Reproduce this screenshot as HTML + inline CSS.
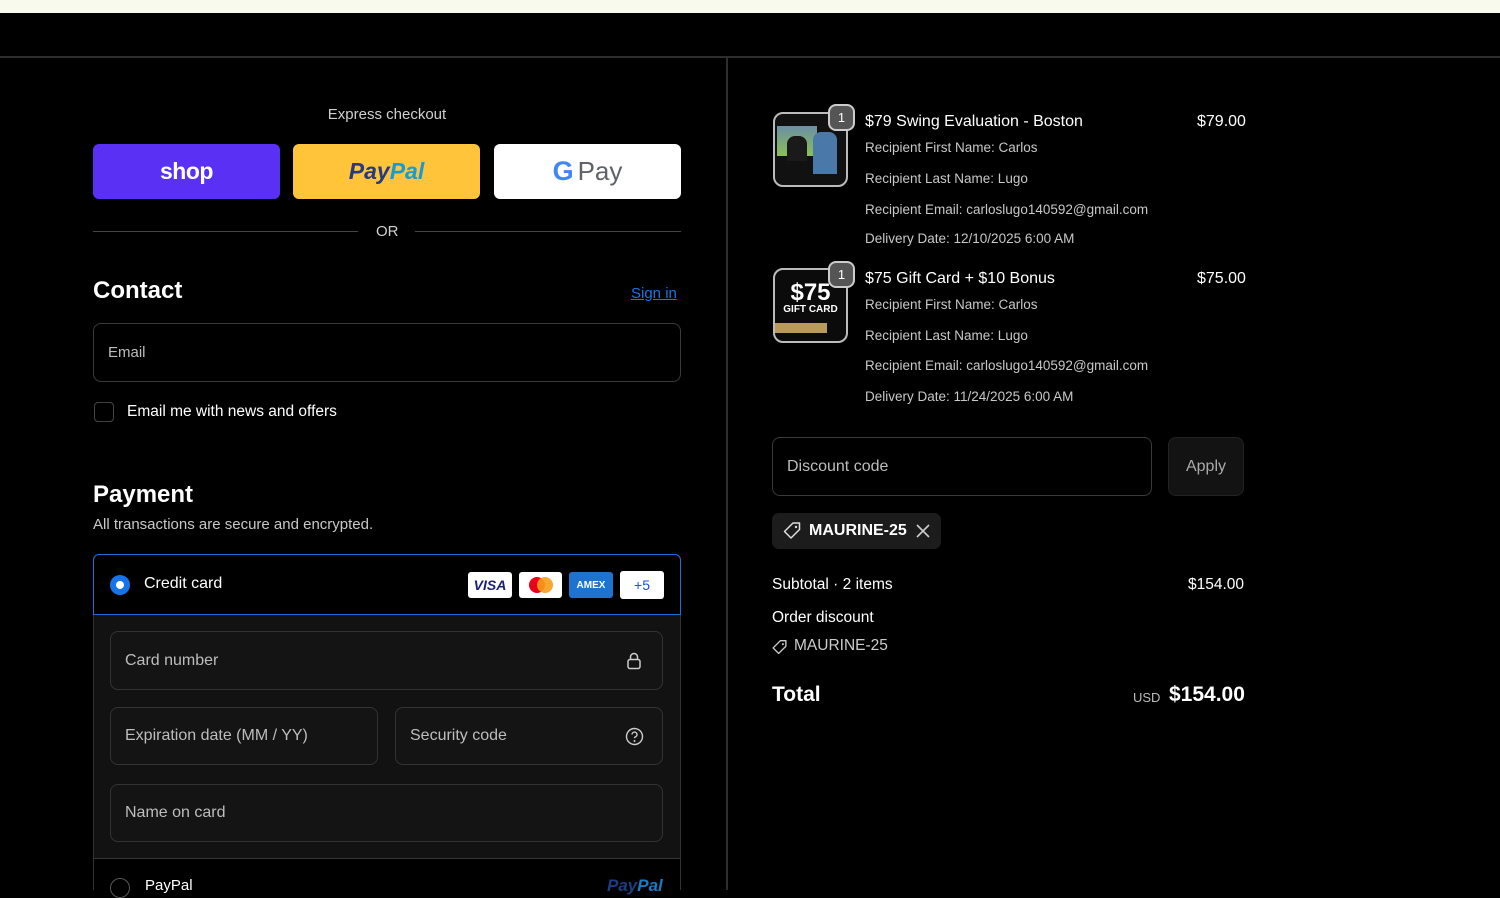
<!DOCTYPE html>
<html><head><meta charset="utf-8"><style>
*{box-sizing:border-box;margin:0;padding:0}
body{width:1500px;height:890px;overflow:hidden;background:#000;font-family:"Liberation Sans",sans-serif;color:#fff;position:relative}
.a{position:absolute}
.inp{position:absolute;border:1px solid #3a3a3a;border-radius:8px;background:#000;color:#bdbdbd;font-size:16px;padding-left:14px;display:flex;align-items:center}
.dk{background:#141414;border-color:#333}
.g{color:#c8c8c8;font-size:13.5px}
</style></head><body>
<div class="a" style="left:0;top:0;width:1500px;height:13px;background:#f8faee"></div>
<div class="a" style="left:0;top:56px;width:1500px;height:2px;background:#2e2e2e"></div>
<div class="a" style="left:726px;top:57px;width:2px;height:833px;background:#2e2e2e"></div>

<div class="a" style="left:93px;top:106px;width:588px;text-align:center;font-size:15px;color:#d0d0d0">Express checkout</div>
<div class="a" style="left:93px;top:144px;width:187px;height:55px;border-radius:6px;background:#5a31f4;display:flex;align-items:center;justify-content:center;font-weight:bold;font-size:23px;letter-spacing:-0.5px">shop</div>
<div class="a" style="left:293px;top:144px;width:187px;height:55px;border-radius:6px;background:#ffc439;display:flex;align-items:center;justify-content:center;font-weight:bold;font-style:italic;font-size:23px"><span style="color:#253b80">Pay</span><span style="color:#179bd7">Pal</span></div>
<div class="a" style="left:494px;top:144px;width:187px;height:55px;border-radius:6px;background:#fff;display:flex;align-items:center;justify-content:center;font-size:26px;color:#5f6368"><b style="color:#4285f4;font-size:27px;margin-right:4px">G</b>Pay</div>
<div class="a" style="left:93px;top:231px;width:265px;height:1px;background:#444"></div>
<div class="a" style="left:415px;top:231px;width:266px;height:1px;background:#444"></div>
<div class="a" style="left:376px;top:223px;font-size:15px;color:#d0d0d0">OR</div>

<div class="a" style="left:93px;top:277px;font-size:24px;font-weight:bold">Contact</div>
<div class="a" style="left:631px;top:285px;font-size:15px;color:#1773e8;text-decoration:underline">Sign in</div>
<div class="inp" style="left:93px;top:323px;width:588px;height:59px;font-size:15px">Email</div>
<div class="a" style="left:94px;top:402px;width:20px;height:20px;border:1px solid #444;border-radius:4px"></div>
<div class="a" style="left:127px;top:403px;font-size:15.5px">Email me with news and offers</div>

<div class="a" style="left:93px;top:481px;font-size:24px;font-weight:bold">Payment</div>
<div class="a" style="left:93px;top:516px;font-size:15px;color:#c8c8c8">All transactions are secure and encrypted.</div>

<div class="a" style="left:93px;top:554px;width:588px;height:336px;border:1px solid #333;border-radius:6px 6px 0 0;background:#121212"></div>
<div class="a" style="left:93px;top:554px;width:588px;height:61px;border:1.5px solid #1d6fd8;border-radius:6px 6px 0 0;background:#000"></div>
<div class="a" style="left:110px;top:575px;width:20px;height:20px;border-radius:50%;background:#1773e8"></div>
<div class="a" style="left:116px;top:581px;width:8px;height:8px;border-radius:50%;background:#fff"></div>
<div class="a" style="left:144px;top:575px;font-size:16px">Credit card</div>
<div class="a" style="left:468px;top:572px;width:44px;height:26px;background:#fff;border-radius:3px;color:#1a1f71;font-weight:bold;font-style:italic;font-size:14px;display:flex;align-items:center;justify-content:center">VISA</div>
<div class="a" style="left:519px;top:572px;width:43px;height:26px;background:#fff;border-radius:3px"><div class="a" style="left:10px;top:5px;width:16px;height:16px;border-radius:50%;background:#eb001b"></div><div class="a" style="left:18px;top:5px;width:16px;height:16px;border-radius:50%;background:#f79e1b;opacity:.9"></div></div>
<div class="a" style="left:569px;top:572px;width:44px;height:26px;background:#1f72cd;border-radius:3px;color:#fff;font-weight:bold;font-size:10px;display:flex;align-items:center;justify-content:center">AMEX</div>
<div class="a" style="left:620px;top:571px;width:44px;height:28px;background:#fff;border-radius:3px;color:#1d4fd8;font-size:14px;display:flex;align-items:center;justify-content:center">+5</div>

<div class="inp dk" style="left:110px;top:631px;width:553px;height:59px">Card number</div>
<svg class="a" style="left:626px;top:652px" width="16" height="18" viewBox="0 0 16 18"><rect x="2" y="7.5" width="12" height="9" rx="2" fill="none" stroke="#ccc" stroke-width="1.5"/><path d="M4.5 7.5V5a3.5 3.5 0 0 1 7 0v2.5" fill="none" stroke="#ccc" stroke-width="1.5"/></svg>
<div class="inp dk" style="left:110px;top:707px;width:268px;height:58px">Expiration date (MM / YY)</div>
<div class="inp dk" style="left:395px;top:707px;width:268px;height:58px">Security code</div>
<svg class="a" style="left:625px;top:727px" width="19" height="19" viewBox="0 0 19 19"><circle cx="9.5" cy="9.5" r="8" fill="none" stroke="#ccc" stroke-width="1.4"/><path d="M7 7.5a2.5 2.5 0 1 1 3.3 2.4c-.6.3-.8.7-.8 1.4" fill="none" stroke="#ccc" stroke-width="1.4"/><circle cx="9.5" cy="14" r="1" fill="#ccc"/></svg>
<div class="inp dk" style="left:110px;top:784px;width:553px;height:58px">Name on card</div>
<div class="a" style="left:94px;top:858px;width:586px;height:32px;background:#000;border-top:1px solid #333"></div>
<div class="a" style="left:110px;top:878px;width:20px;height:20px;border-radius:50%;border:1px solid #555"></div>
<div class="a" style="left:145px;top:877px;font-size:15px">PayPal</div>
<div class="a" style="left:607px;top:876px;font-size:17px;font-weight:bold;font-style:italic;color:#1d3d80">Pay<span style="color:#1a7bc0">Pal</span></div>

<!-- right -->
<div class="a" style="left:773px;top:112px;width:75px;height:75px;border:2px solid #bbb;border-radius:10px;overflow:hidden;background:#111">
<div class="a" style="left:2px;top:12px;width:40px;height:30px;background:linear-gradient(#6b8fa6,#8bbf55)"></div>
<div class="a" style="left:12px;top:22px;width:20px;height:25px;background:#1a1a1a;border-radius:8px 8px 0 0"></div>
<div class="a" style="left:38px;top:18px;width:24px;height:42px;background:#4a78a8;border-radius:8px 8px 0 0"></div>
</div>
<div class="a" style="left:828px;top:104px;width:27px;height:27px;border:2px solid #ccc;border-radius:8px;background:#555;font-size:13px;display:flex;align-items:center;justify-content:center">1</div>
<div class="a" style="left:865px;top:113px;font-size:16px">$79 Swing Evaluation - Boston</div>
<div class="a" style="left:1197px;top:113px;font-size:16px">$79.00</div>
<div class="a g" style="left:865px;top:140px">Recipient First Name: Carlos</div>
<div class="a g" style="left:865px;top:171px">Recipient Last Name: Lugo</div>
<div class="a g" style="left:865px;top:202px">Recipient Email: carloslugo140592@gmail.com</div>
<div class="a g" style="left:865px;top:231px">Delivery Date: 12/10/2025 6:00 AM</div>

<div class="a" style="left:773px;top:268px;width:75px;height:75px;border:2px solid #bbb;border-radius:10px;overflow:hidden;background:#0b0b0b;text-align:center">
<div style="font-weight:bold;font-size:24px;margin-top:12px;line-height:22px">$75</div>
<div style="font-weight:bold;font-size:10px">GIFT CARD</div>
<div class="a" style="left:0;top:53px;width:52px;height:10px;background:#b99a5a"></div>
</div>
<div class="a" style="left:828px;top:261px;width:27px;height:27px;border:2px solid #ccc;border-radius:8px;background:#555;font-size:13px;display:flex;align-items:center;justify-content:center">1</div>
<div class="a" style="left:865px;top:270px;font-size:16px">$75 Gift Card + $10 Bonus</div>
<div class="a" style="left:1197px;top:270px;font-size:16px">$75.00</div>
<div class="a g" style="left:865px;top:297px">Recipient First Name: Carlos</div>
<div class="a g" style="left:865px;top:328px">Recipient Last Name: Lugo</div>
<div class="a g" style="left:865px;top:358px">Recipient Email: carloslugo140592@gmail.com</div>
<div class="a g" style="left:865px;top:389px">Delivery Date: 11/24/2025 6:00 AM</div>

<div class="inp" style="left:772px;top:437px;width:380px;height:59px">Discount code</div>
<div class="a" style="left:1168px;top:437px;width:76px;height:59px;border-radius:8px;background:#131313;border:1px solid #222;color:#aaa;font-size:16px;display:flex;align-items:center;justify-content:center">Apply</div>
<div class="a" style="left:772px;top:513px;width:169px;height:36px;border-radius:7px;background:#1c1c1c"></div>
<svg class="a" style="left:782px;top:521px" width="20" height="20" viewBox="0 0 20 20"><path d="M11 2h6.5v6.5L9 17 2.5 10.5Z" fill="none" stroke="#ddd" stroke-width="1.5" stroke-linejoin="round"/><circle cx="14" cy="6" r="1.2" fill="#ddd"/></svg>
<div class="a" style="left:809px;top:522px;font-size:16px;font-weight:bold">MAURINE-25</div>
<svg class="a" style="left:916px;top:524px" width="14" height="14" viewBox="0 0 14 14"><path d="M1 1L13 13M13 1L1 13" stroke="#ccc" stroke-width="1.6"/></svg>

<div class="a" style="left:772px;top:576px;font-size:15.5px">Subtotal · 2 items</div>
<div class="a" style="left:1188px;top:576px;font-size:15.5px">$154.00</div>
<div class="a" style="left:772px;top:609px;font-size:15.5px">Order discount</div>
<svg class="a" style="left:771px;top:639px" width="17" height="17" viewBox="0 0 20 20"><path d="M11 2h6.5v6.5L9 17 2.5 10.5Z" fill="none" stroke="#ccc" stroke-width="1.6" stroke-linejoin="round"/><circle cx="14" cy="6" r="1.2" fill="#ccc"/></svg>
<div class="a" style="left:794px;top:637px;font-size:15.5px;color:#ccc">MAURINE-25</div>
<div class="a" style="left:772px;top:683px;font-size:21px;font-weight:bold">Total</div>
<div class="a" style="left:1133px;top:690px;font-size:13px;color:#bbb">USD</div>
<div class="a" style="left:1169px;top:683px;font-size:21px;font-weight:bold">$154.00</div>
</body></html>
